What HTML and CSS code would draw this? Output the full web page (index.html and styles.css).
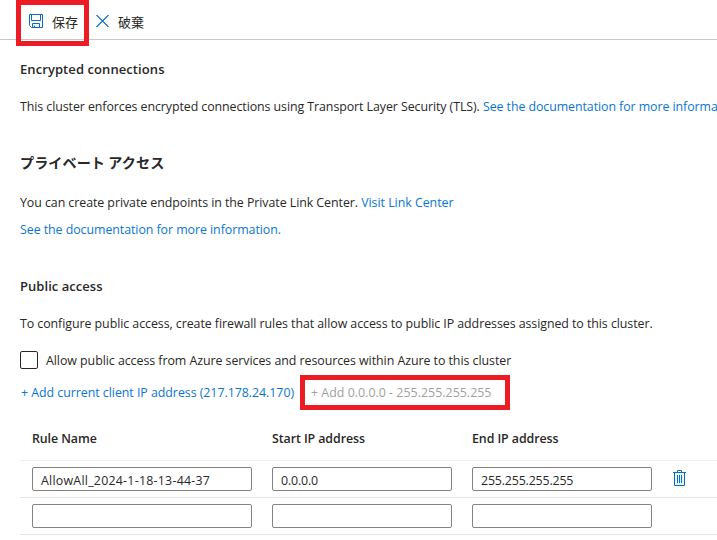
FILE: index.html
```html
<!DOCTYPE html>
<html lang="ja">
<head>
<meta charset="utf-8">
<title>Networking</title>
<link rel="stylesheet" href="styles.css">
</head>
<body>
<div class="toolbar">
  <button class="command save">
    <svg width="14" height="14" viewBox="0 0 14 14" fill="none" stroke="#0f6cbd"><path d="M.5.5h13v13h-11l-2-2zM2.5.5v6h9v-6M3.5 13.5v-4h7v4M5.5 13.5v-2"/></svg>
    <span>保存</span>
  </button>
  <button class="command discard">
    <svg width="13" height="12" viewBox="0 0 13 12" fill="none" stroke="#0f6cbd" stroke-width="1.15"><path d="M.5 0l12 12M12.5 0l-12 12"/></svg>
    <span>破棄</span>
  </button>
  <div class="mark mark-save"></div>
</div>
<main>
  <h2 class="encrypted">Encrypted connections</h2>
  <p class="tls">This cluster enforces encrypted connections using Transport Layer Security (TLS). <a>See the documentation for more information.</a></p>
  <h2 class="private">プライベート アクセス</h2>
  <p class="link-center">You can create private endpoints in the Private Link Center. <a>Visit Link Center</a></p>
  <p class="docs"><a>See the documentation for more information.</a></p>
  <h2 class="public">Public access</h2>
  <p class="configure">To configure public access, create firewall rules that allow access to public IP addresses assigned to this cluster.</p>
  <label class="allow"><i class="box"></i><span>Allow public access from Azure services and resources within Azure to this cluster</span></label>
  <div class="actions">
    <a>+ Add current client IP address (217.178.24.170)</a>
    <div class="add-all">+ Add 0.0.0.0 - 255.255.255.255<div class="mark mark-all"></div></div>
  </div>
  <div class="rules">
    <div class="row head"><span>Rule Name</span><span>Start IP address</span><span>End IP address</span></div>
    <div class="row"><div class="field name">AllowAll_2024-1-18-13-44-37</div><div class="field ip">0.0.0.0</div><div class="field ip">255.255.255.255</div>
      <svg class="trash" width="13" height="16" viewBox="0 0 13 16" fill="none" stroke="#0f6cbd"><path fill="#e3f8fc" d="M1.5 2.5h10v13h-10z"/><path d="M0 2.5h13M4.5 2.5v-2h4v2M4.5 5v8M6.5 5v8M8.5 5v8"/></svg>
    </div>
    <div class="row"><div class="field"></div><div class="field"></div><div class="field"></div></div>
  </div>
</main>
</body>
</html>
```
FILE: styles.css
```css
* { box-sizing: border-box; }
body {
  margin: 0;
  width: 717px;
  height: 540px;
  overflow: hidden;
  background: #fff;
  color: #292827;
  font: 12.4px/20px "Open Sans", "Noto Sans CJK JP", sans-serif;
  letter-spacing: -0.06px;
}
h2, p { margin: 0; white-space: nowrap; font-size: inherit; height: 20px; }
h2, .head { font-weight: 600; }
h2 { font-size: 13px; letter-spacing: 0.08px; }
a { color: #0b76d1; }
.toolbar {
  position: relative;
  display: flex;
  height: 40px;
  padding-left: 29px;
  border-bottom: 1px solid #c8c8c8;
}
.command {
  display: flex;
  align-items: center;
  height: 43px;
  padding: 0;
  border: 0;
  background: none;
  color: inherit;
  font: 13px/20px "Noto Sans CJK JP", sans-serif;
}
.command svg { margin-bottom: 1px; }
.save { gap: 9px; width: 67px; }
.discard { gap: 9px; }
.mark { position: absolute; border: 5px solid #ed1c24; }
.mark-save { left: 16px; top: 0; width: 73px; height: 46px; }
main { padding: 19px 0 0 20px; }
.tls { margin-top: 18px; overflow: hidden; letter-spacing: -0.075px; }
.private { margin-top: 35px; font: 700 14.1px/20px "Noto Sans CJK JP", sans-serif; }
.link-center { margin-top: 21px; }
.link-center a { letter-spacing: -0.03px; }
.docs { margin-top: 7px; }
.public { margin-top: 36px; letter-spacing: 0.04px; }
.configure { margin-top: 18px; }
.allow { display: flex; align-items: center; gap: 8px; height: 20px; margin-top: 17px; white-space: nowrap; letter-spacing: -0.05px; }
.box { width: 18px; height: 18px; margin-top: -2px; border: 1px solid #292827; border-radius: 2px; }
.actions { display: flex; height: 20px; margin-top: 12px; white-space: nowrap; }
.actions > a { width: 280px; padding-left: 1px; letter-spacing: -0.04px; }
.add-all { position: relative; width: 210px; padding-left: 11px; color: #a19f9d; letter-spacing: 0.02px; }
.mark-all { left: 0; top: -8px; width: 210px; height: 35px; }
.rules { margin-top: 14px; }
.row {
  display: grid;
  grid-template-columns: 220px 180px 180px 13px;
  column-gap: 20px;
  align-items: center;
  height: 37px;
  padding-left: 12px;
  border-bottom: 1px solid #e6e6e6;
}
.head { height: 44px; padding-top: 1px; letter-spacing: -0.08px; border-bottom-color: #f0f0f0; }
.field { height: 24px; padding: 3px 8px 0; border: 1px solid #858381; border-radius: 2px; white-space: nowrap; }
.name { letter-spacing: 0.24px; }
.ip { letter-spacing: -0.17px; }
.trash { margin: 0 0 3px 1px; }
```
